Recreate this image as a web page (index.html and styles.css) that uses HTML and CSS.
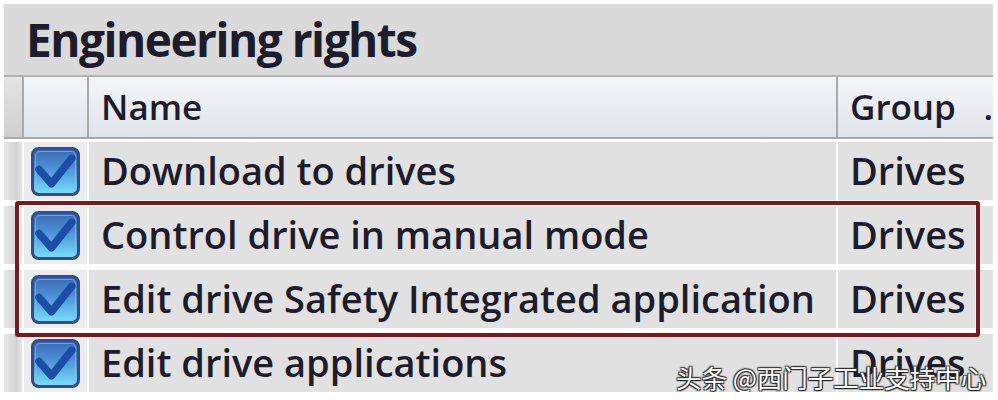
FILE: index.html
```html
<!DOCTYPE html>
<html lang="en">
<head>
<meta charset="UTF-8">
<title>Engineering rights</title>
<link rel="stylesheet" href="styles.css">
</head>
<body>

<div class="panel">

<div class="title">Engineering rights</div>

<div class="grid header">
    <div class="stub"></div>
    <div class="cell box-col"></div>
    <div class="cell name">Name</div>
    <div class="cell group">Group<span class="more">.</span></div>
</div>

<div class="grid row">
    <div class="stub"></div>
    <div class="cell box-col">
        <svg class="check" viewBox="0 0 48 48"><use href="#cb"/></svg>
    </div>
    <div class="cell name">Download to drives</div>
    <div class="cell group">Drives</div>
</div>

<div class="grid row">
    <div class="stub"></div>
    <div class="cell box-col">
        <svg class="check" viewBox="0 0 48 48"><use href="#cb"/></svg>
    </div>
    <div class="cell name">Control drive in manual mode</div>
    <div class="cell group">Drives</div>
</div>

<div class="grid row">
    <div class="stub"></div>
    <div class="cell box-col">
        <svg class="check" viewBox="0 0 48 48"><use href="#cb"/></svg>
    </div>
    <div class="cell name">Edit drive Safety Integrated application</div>
    <div class="cell group">Drives</div>
</div>

<div class="grid row">
    <div class="stub"></div>
    <div class="cell box-col">
        <svg class="check" viewBox="0 0 48 48"><use href="#cb"/></svg>
    </div>
    <div class="cell name">Edit drive applications</div>
    <div class="cell group">Drives</div>
</div>

<div class="mark"></div>
<div class="watermark">头条 @西门子工业支持中心</div>

</div>

<svg width="0" height="0" style="position:absolute">
    <defs>
        <linearGradient id="fill" x1="0" y1="0" x2="0" y2="1">
            <stop offset="0" stop-color="#3b66b4"/>
            <stop offset="0.45" stop-color="#4f93d8"/>
            <stop offset="1" stop-color="#79e2fb"/>
        </linearGradient>
        <g id="cb">
            <rect x="1.5" y="1.5" width="45" height="45" rx="6" fill="url(#fill)" stroke="#2f4f85" stroke-width="3"/>
            <rect x="4.5" y="4.5" width="39" height="39" rx="4" fill="none" stroke="#8fc4ee" stroke-width="1" opacity="0.6"/>
            <path d="M8 22 L20 36 L40 11" fill="none" stroke="#1c4ea6" stroke-width="7.5" stroke-linecap="round" stroke-linejoin="round"/>
        </g>
    </defs>
</svg>

</body>
</html>
```

FILE: styles.css
```css
body{
    margin:0;
    background:white;
    font-family:"Open Sans",Arial,sans-serif;
    color:#1d1c2b;
    overflow:hidden;
}

.panel{
    position:relative;
    width:989px;
    margin:4px 0 0 4px;
}

.title{
    height:71px;
    background:#dadada;
    border-bottom:2px solid #b3b3b3;
    padding-left:22px;
    font-size:46px;
    font-weight:700;
    line-height:70px;
    letter-spacing:-1.5px;
}

.grid{
    display:grid;
    grid-template-columns:18px 63px 747px 1fr;
    column-gap:2px;
}

.header{
    height:60px;
    background:#a9a9a9;
    border-bottom:2px solid #a9a9a9;
}

.header .cell{
    background:linear-gradient(#f3f5f8,#dfe4ea);
    font-size:35px;
    font-weight:600;
    line-height:60px;
}

.header .stub{
    background:linear-gradient(#e4e4e4,#cfcfcf);
}

.row{
    height:58px;
    margin-top:6px;
    background:white;
}

.header + .row{
    margin-top:3px;
}

.row .stub{
    background:linear-gradient(90deg,#e6e6e6,#d2d2d2 70%,#e8e8e8);
}

.row .cell{
    background:#e1e1e1;
    font-size:38px;
    font-weight:600;
    line-height:57px;
    white-space:nowrap;
}

.row .box-col{
    background:#ececec;
}

.cell.name{
    padding-left:12px;
}

.cell.group{
    padding-left:12px;
    position:relative;
    overflow:hidden;
}

.box-col{
    display:flex;
    align-items:center;
    padding-left:7px;
}

.check{
    width:49px;
    height:49px;
}

.more{
    position:absolute;
    right:0;
    top:0;
}

.mark{
    position:absolute;
    left:11px;
    top:197px;
    width:965px;
    height:136px;
    box-sizing:border-box;
    border:4px solid #7a1a1c;
    border-radius:3px;
    box-shadow:inset 0 0 0 1px rgba(255,255,255,0.8);
}

.watermark{
    position:absolute;
    left:672px;
    top:354px;
    white-space:nowrap;
    font-family:"Noto Sans CJK SC",sans-serif;
    font-size:25.5px;
    color:white;
    text-shadow:1px 1px 1px #222,-1px -1px 1px #333,1px -1px 1px #333,-1px 1px 1px #333;
}
```
